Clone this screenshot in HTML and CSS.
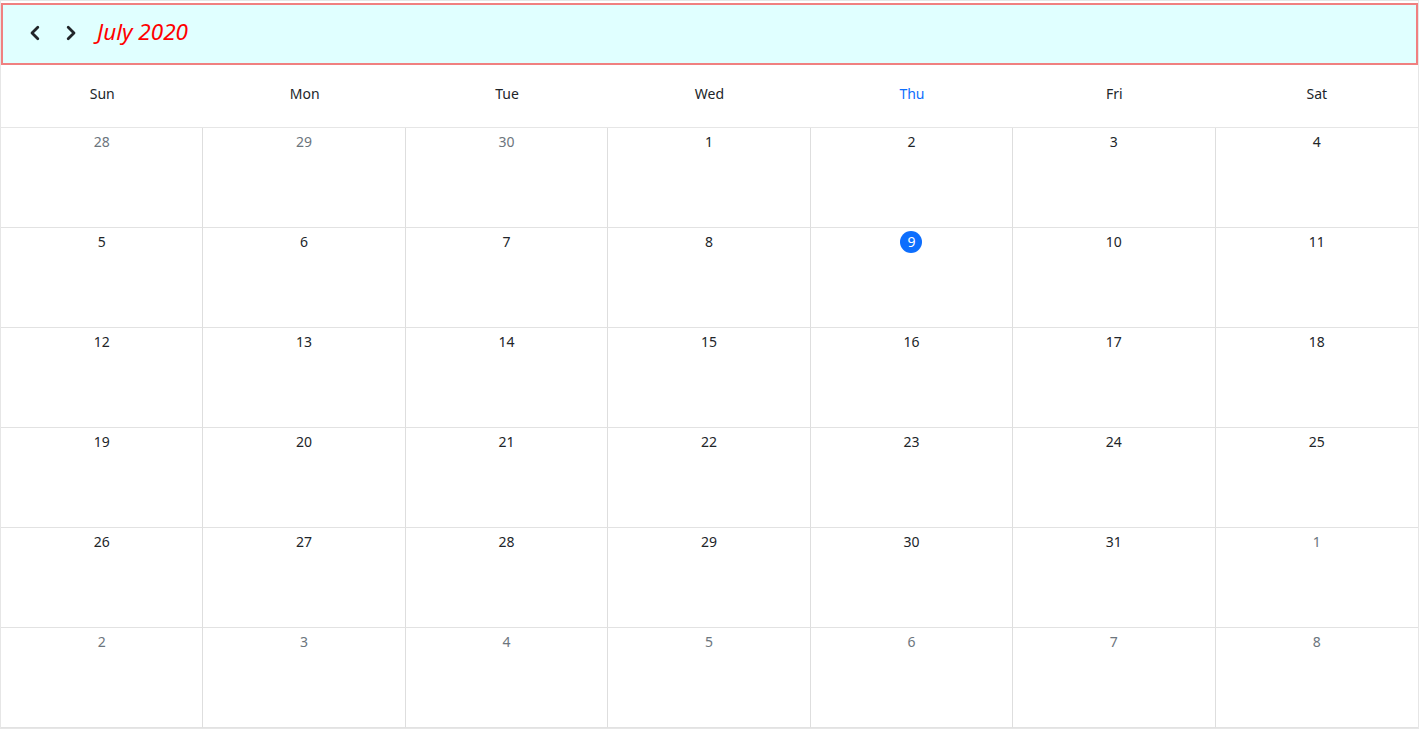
FILE: index.html
```html
<!DOCTYPE html>
<html>
<head>
<title>Calendar</title>
<link rel="stylesheet" href="styles.css">
</head>
<body>

<div class="calendar">
  <div class="toolbar">
    <button class="nav-btn" title="Previous">
      <svg width="16" height="16" viewBox="0 0 16 16"><polyline points="10.8,2.2 5,8 10.8,13.8" fill="none" stroke="#212529" stroke-width="2.8" stroke-linecap="round" stroke-linejoin="round"/></svg>
    </button>
    <button class="nav-btn" title="Next">
      <svg width="16" height="16" viewBox="0 0 16 16"><polyline points="5.2,2.2 11,8 5.2,13.8" fill="none" stroke="#212529" stroke-width="2.8" stroke-linecap="round" stroke-linejoin="round"/></svg>
    </button>
    <span class="title">July 2020</span>
  </div>

  <div class="weekdays">
    <div>Sun</div>
    <div>Mon</div>
    <div>Tue</div>
    <div>Wed</div>
    <div class="current">Thu</div>
    <div>Fri</div>
    <div>Sat</div>
  </div>

  <div class="days">
    <div class="day other"><span>28</span></div>
    <div class="day other"><span>29</span></div>
    <div class="day other"><span>30</span></div>
    <div class="day"><span>1</span></div>
    <div class="day"><span>2</span></div>
    <div class="day"><span>3</span></div>
    <div class="day"><span>4</span></div>

    <div class="day"><span>5</span></div>
    <div class="day"><span>6</span></div>
    <div class="day"><span>7</span></div>
    <div class="day"><span>8</span></div>
    <div class="day today"><span>9</span></div>
    <div class="day"><span>10</span></div>
    <div class="day"><span>11</span></div>

    <div class="day"><span>12</span></div>
    <div class="day"><span>13</span></div>
    <div class="day"><span>14</span></div>
    <div class="day"><span>15</span></div>
    <div class="day"><span>16</span></div>
    <div class="day"><span>17</span></div>
    <div class="day"><span>18</span></div>

    <div class="day"><span>19</span></div>
    <div class="day"><span>20</span></div>
    <div class="day"><span>21</span></div>
    <div class="day"><span>22</span></div>
    <div class="day"><span>23</span></div>
    <div class="day"><span>24</span></div>
    <div class="day"><span>25</span></div>

    <div class="day"><span>26</span></div>
    <div class="day"><span>27</span></div>
    <div class="day"><span>28</span></div>
    <div class="day"><span>29</span></div>
    <div class="day"><span>30</span></div>
    <div class="day"><span>31</span></div>
    <div class="day other"><span>1</span></div>

    <div class="day other"><span>2</span></div>
    <div class="day other"><span>3</span></div>
    <div class="day other"><span>4</span></div>
    <div class="day other"><span>5</span></div>
    <div class="day other"><span>6</span></div>
    <div class="day other"><span>7</span></div>
    <div class="day other"><span>8</span></div>
  </div>
</div>

</body>
</html>
```

FILE: styles.css
```css
* { box-sizing: border-box; }
body { margin: 0; font-family: "Noto Sans", "Open Sans", sans-serif; font-size: 14px; color: #212529; background: #fff; }
.calendar { border: 1px solid #e6e6e6; }
.toolbar { display: flex; align-items: center; gap: 4px; height: 62px; margin-top: 2px; padding: 0 16px 2px; background-color: #e0ffff; border: 2px solid #f08080; }
.nav-btn { width: 32px; height: 32px; padding: 0; border: none; background: none; cursor: pointer; display: flex; align-items: center; justify-content: center; }
.title { margin-left: 6px; font-size: 22.5px; font-style: italic; color: #ff0000; line-height: 1; margin-bottom: 2px; }
.weekdays { display: grid; grid-template-columns: repeat(7, 1fr); height: 63px; border-bottom: 1px solid #e6e6e6; }
.weekdays div { text-align: center; padding-top: 18px; line-height: 22px; }
.weekdays .current { color: #0d6efd; }
.days { display: grid; grid-template-columns: repeat(7, 1fr); grid-auto-rows: 100px; }
.day { text-align: center; padding-top: 3px; border-right: 1px solid #dedede; border-bottom: 1px solid #e2e2e2; }
.day:nth-child(7n) { border-right: none; }
.day span { display: inline-block; min-width: 22px; height: 22px; line-height: 22px; border-radius: 50%; }
.day.other { color: #6c757d; }
.day.today span { background-color: #0d6efd; color: #fff; }
```
